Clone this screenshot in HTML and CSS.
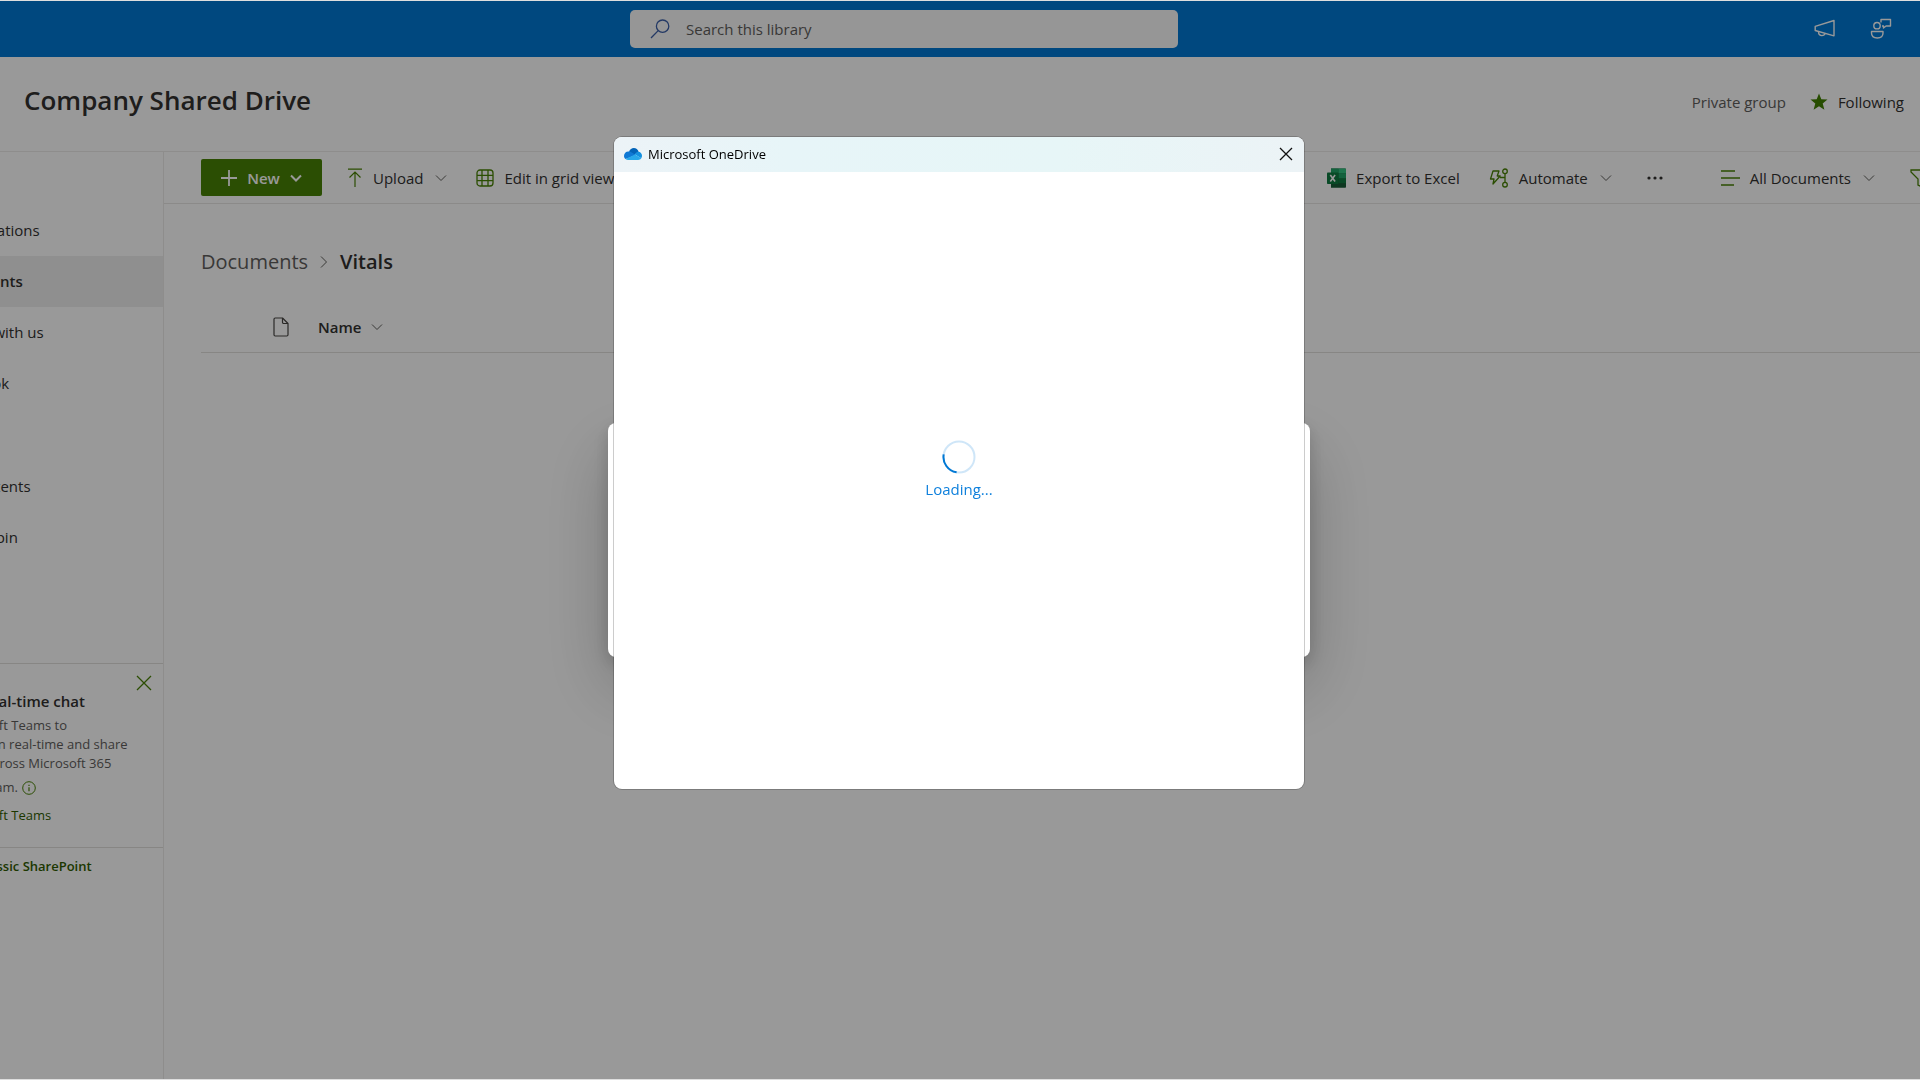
FILE: index.html
```html
<!DOCTYPE html>
<html lang="en">
<head>
<meta charset="utf-8">
<meta name="viewport" content="width=device-width, initial-scale=1">
<title>Company Shared Drive</title>
<link rel="stylesheet" href="styles.css">
</head>
<body>
<svg class="defs" aria-hidden="true">
  <symbol id="chevron" viewBox="0 0 12 12"><path d="M1 3.5l5 5 5-5" fill="none" stroke="currentColor"/></symbol>
</svg>
<div class="app">
  <header class="topbar">
    <form class="search" role="search">
      <label for="q" aria-label="Search">
        <svg width="20" height="20" viewBox="0 0 20 20" fill="none" stroke="#3b5fa8" stroke-width="1.3"><circle cx="12.6" cy="7.2" r="6.2"/><path d="M8.2 11.6L1 19"/></svg>
      </label>
      <input id="q" type="text" placeholder="Search this library">
    </form>
    <div class="topbar-actions">
      <button type="button" class="icon-button" aria-label="Announcements">
        <svg width="22" height="20" viewBox="0 0 22 20" fill="none" stroke="#fff" stroke-width="1.4" stroke-linejoin="round"><path d="M1.2 7.4L20 1.5v15.3L1.2 11.5z"/><path d="M4.5 12.6c0 2.4 1.400 4 3.300 4s3-1 3.300-2.200"/></svg>
      </button>
      <button type="button" class="icon-button" aria-label="Feedback">
        <svg width="22" height="22" viewBox="0 0 22 22" fill="none" stroke="#fff" stroke-width="1.4" stroke-linejoin="round"><circle cx="7" cy="7.700" r="3.200"/><path d="M1.500 13.500h11.500v1.500c0 3.300-2.300 5-5.700 5s-5.800-1.700-5.800-5z"/><path d="M11 4.500v-3h9.500v6.500h-4.500l-2.500 2v-2h-1.500"/></svg>
      </button>
    </div>
  </header>

  <div class="site-header">
    <h1>Company Shared Drive</h1>
    <div class="site-meta">
      <span class="muted">Private group</span>
      <button type="button" class="follow">
        <svg width="18" height="18" viewBox="0 0 18 18" fill="#418000"><path d="M9 .5l2.300 5.700 6.200.3-4.800 4 1.700 6.200L9 13.200l-5.400 3.500 1.700-6.200-4.800-4 6.200-.3z"/></svg>
        Following
      </button>
    </div>
  </div>

  <div class="columns">
    <aside class="sidebar">
      <nav class="site-nav">
        <a href="#">Conversations</a>
        <a href="#" class="selected" aria-current="page">Documents</a>
        <a href="#">Shared with us</a>
        <a href="#">Notebook</a>
        <a href="#" class="after-gap">Site contents</a>
        <a href="#">Recycle bin</a>
      </nav>
      <section class="teams">
        <button type="button" class="teams-close" aria-label="Dismiss">
          <svg width="16" height="16" viewBox="0 0 16 16" fill="none" stroke="#498205" stroke-width="1.300"><path d="M1 1l14 14M15 1L1 15"/></svg>
        </button>
        <h2>Add real-time chat</h2>
        <p>Add Microsoft Teams to<br>collaborate in real-time and share<br>resources across Microsoft 365</p>
        <p class="teams-last">with your team.
          <svg width="14" height="14" viewBox="0 0 14 14" fill="none" stroke="#498205"><circle cx="7" cy="7" r="6.300"/><path d="M7 6.200v4M7 3.700v1.300" stroke-width="1.200"/></svg>
        </p>
        <a href="#">Add Microsoft Teams</a>
      </section>
      <a href="#" class="classic">Return to classic SharePoint</a>
    </aside>

    <main class="content">
      <div class="commands">
        <button type="button" class="new">
          <svg width="16" height="16" viewBox="0 0 16 16" stroke="#fff" stroke-width="1.800"><path d="M8 0v16M0 8h16"/></svg>
          New
          <svg width="12" height="12" class="bold-chevron"><use href="#chevron"/></svg>
        </button>
        <button type="button" class="command upload">
          <svg width="16" height="20" viewBox="0 0 16 20" fill="none" stroke="#498205" stroke-width="1.200"><path d="M1 1.200h14M8 19V4M2.500 9.500L8 4l5.500 5.500"/></svg>
          Upload
          <svg class="chevron" width="12" height="12"><use href="#chevron"/></svg>
        </button>
        <button type="button" class="command">
          <svg width="18" height="18" viewBox="0 0 18 18" fill="none" stroke="#498205" stroke-width="1.300"><rect x="1" y="1" width="16" height="16" rx="3"/><path d="M6 1v16M12 1v16M1 6.300h16M1 11.700h16"/></svg>
          Edit in grid view
        </button>
        <div class="commands-far">
          <button type="button" class="command">
            <svg width="19" height="20" viewBox="0 0 19 20"><path d="M4 .500h14.200a.8.800 0 0 1 .8.800V19a.8.800 0 0 1-.8.800H4z" fill="#185c37"/><path d="M4 .500h7.500v5H4z" fill="#21a366"/><path d="M11.500.500h6.700a.8.800 0 0 1 .8.800v4.200h-7.500z" fill="#33c481"/><path d="M4 5.500h7.500v5H4z" fill="#107c41"/><path d="M11.500 5.500H19v5h-7.500z" fill="#21a366"/><path d="M11.500 10.500H19v4.700h-7.500z" fill="#107c41"/><rect y="4.500" width="11.500" height="11.500" rx=".8" fill="#107c41"/><path d="M3.300 7l4.800 6.500M8.100 7l-4.800 6.500" stroke="#fff" stroke-width="1.600"/></svg>
            Export to Excel
          </button>
          <button type="button" class="command automate">
            <svg width="20" height="20" viewBox="0 0 20 20" fill="none" stroke="#498205" stroke-width="1.300" stroke-linejoin="round"><path d="M4 3h6L8.200 8h3L4 16l1-5H1.500z"/><circle cx="16" cy="3.300" r="2.300"/><circle cx="16" cy="16.700" r="2.300"/><path d="M16 5.600v8.800M11 9.500h5"/></svg>
            Automate
            <svg class="chevron" width="12" height="12"><use href="#chevron"/></svg>
          </button>
          <button type="button" class="command more" aria-label="More">
            <svg width="16" height="4" viewBox="0 0 16 4" fill="#323130"><circle cx="2" cy="2" r="1.600"/><circle cx="8" cy="2" r="1.600"/><circle cx="14" cy="2" r="1.600"/></svg>
          </button>
          <button type="button" class="command view">
            <svg width="19" height="18" viewBox="0 0 19 18" stroke="#498205" stroke-width="1.400"><path d="M0 2h14M0 9h19M0 16h13"/></svg>
            All Documents
            <svg class="chevron" width="12" height="12"><use href="#chevron"/></svg>
          </button>
          <button type="button" class="command filter" aria-label="Filter">
            <svg width="20" height="20" viewBox="0 0 20 20" fill="none" stroke="#498205" stroke-width="1.300"><path d="M1 2h18v2l-7 7v8l-4-2v-6L1 4z"/></svg>
          </button>
        </div>
      </div>

      <nav class="crumbs" aria-label="Breadcrumb">
        <a href="#">Documents</a>
        <svg width="8" height="14" viewBox="0 0 8 14" fill="none" stroke="#605e5c"><path d="M1 1.500L6.500 7 1 12.500"/></svg>
        <span aria-current="page">Vitals</span>
      </nav>

      <table class="files">
        <thead>
          <tr>
            <th class="type-col" aria-label="Type"><svg width="16" height="20" viewBox="0 0 16 20" fill="none" stroke="#484644" stroke-width="1.200" stroke-linejoin="round"><path d="M2.200 1h7.300L15 6.500v11.300c0 .7-.5 1.200-1.200 1.200H2.200C1.500 19 1 18.500 1 17.800V2.200C1 1.500 1.500 1 2.200 1z"/><path d="M9.500 1v4.300c0 .7.500 1.200 1.200 1.200H15"/></svg></th>
            <th><span class="column-name">Name <svg class="chevron" width="12" height="12"><use href="#chevron"/></svg></span></th>
          </tr>
        </thead>
      </table>
    </main>
  </div>
</div>

<div class="overlay">
  <div class="panel"></div>
  <section class="dialog" role="dialog" aria-modal="true" aria-labelledby="dialog-title">
    <header class="dialog-bar">
      <svg width="18" height="12" viewBox="0 0 18 12"><path d="M5 3.500C6 1.300 7.700 0 9.800 0c2.300 0 4.200 1.500 4.800 3.700L10 7z" fill="#0364b8"/><path d="M0 8c0-2.600 1.900-4.600 4.400-4.600 1.500 0 2.300.4 3.300 1l4.300 2.700L1.600 11C.6 10.300 0 9.300 0 8z" fill="#0f78d4"/><path d="M14.200 3.700c2.200 0 3.800 1.800 3.800 4 0 1-.3 1.800-.8 2.500L11 6.500c.7-1.800 1.700-2.800 3.200-2.800z" fill="#1490df"/><path d="M1.500 11L11 6.400l6.300 3.900c-.7 1.100-1.800 1.700-3.200 1.700H4.300c-1.100 0-2.100-.4-2.800-1z" fill="#28a8ea"/></svg>
      <h2 id="dialog-title">Microsoft OneDrive</h2>
      <button type="button" class="dialog-close" aria-label="Close">
        <svg width="14" height="14" viewBox="0 0 14 14" fill="none" stroke="#111" stroke-width="1.300"><path d="M1 1l12 12M13 1L1 13"/></svg>
      </button>
    </header>
    <div class="dialog-body" role="status">
      <svg width="34" height="34" viewBox="0 0 34 34" fill="none" stroke-width="2"><circle cx="17" cy="17" r="15.500" stroke="#cfe6f8"/><path d="M1.700 14.300A15.500 15.500 0 0 0 14.600 32.300" stroke="#0078d4"/></svg>
      <span>Loading...</span>
    </div>
  </section>
</div>
</body>
</html>
```
FILE: styles.css
```css
* {
  box-sizing: border-box;
}

body {
  margin: 0;
  padding: 1px 0;
  min-height: 100vh;
  display: flex;
  background: #dedede;
  color: #323130;
  font: 15px/20px "Open Sans", "Noto Sans", sans-serif;
}

button {
  border: 0;
  padding: 0;
  background: none;
  color: inherit;
  font: inherit;
}

a {
  color: inherit;
  text-decoration: none;
}

h1,
h2,
p {
  margin: 0;
}

svg {
  flex: none;
}

.defs {
  position: absolute;
  width: 0;
  height: 0;
}

.app {
  flex: 1;
  min-width: 0;
  display: flex;
  flex-direction: column;
  background: #fff;
  overflow: hidden;
}

/* Suite bar */
.topbar {
  display: flex;
  align-items: center;
  justify-content: space-between;
  height: 56px;
  padding-right: 28px;
  background: #0078d4;
}

.search {
  display: flex;
  align-items: center;
  gap: 16px;
  width: 548px;
  height: 38px;
  margin-left: calc(50% - 316px);
  padding: 0 20px;
  border-radius: 5px;
  background: #fafafa;
}

.search label {
  display: flex;
}

.search input {
  flex: 1;
  border: 0;
  padding: 0;
  background: none;
  color: inherit;
  font: inherit;
}

.search input::placeholder {
  color: #605e5c;
  opacity: 1;
}

.topbar-actions {
  display: flex;
  gap: 34px;
}

.icon-button {
  display: flex;
  align-items: center;
}

/* Site header */
.site-header {
  display: flex;
  align-items: center;
  justify-content: space-between;
  height: 95px;
  padding: 0 16px 4px 24px;
  border-bottom: 1px solid #edebe9;
}

h1 {
  font-size: 26px;
  line-height: 36px;
  font-weight: 600;
  padding-bottom: 4px;
}

.site-meta,
.follow {
  display: flex;
  align-items: center;
}

.site-meta {
  gap: 24px;
}

.follow {
  gap: 10px;
}

.muted {
  color: #605e5c;
}

.columns {
  flex: 1;
  display: flex;
}

.sidebar {
  flex: none;
  width: 164px;
  border-right: 1px solid #edebe9;
  overflow: hidden;
  white-space: nowrap;
}

.site-nav {
  display: flex;
  flex-direction: column;
  margin-left: -76px;
  padding-top: 53px;
}

.site-nav a {
  padding-left: 16px;
  line-height: 51px;
}

.site-nav .selected {
  background: #efefef;
  font-weight: 600;
}

.site-nav .after-gap {
  margin-top: 52px;
}

.teams {
  display: flex;
  flex-direction: column;
  margin: 100px 0 0 -77px;
  padding: 11px 11px 22px 0;
  border-top: 1px solid #e1dfdd;
  border-bottom: 1px solid #e1dfdd;
  font-size: 13px;
  line-height: 19px;
  color: #605e5c;
}

.teams-close {
  display: flex;
  align-self: flex-end;
}

.teams h2 {
  padding-left: 28px;
  font-size: 15px;
  line-height: 20px;
  font-weight: 600;
  color: #323130;
}

.teams p {
  margin-top: 5px;
}

.teams .teams-last {
  display: flex;
  align-items: center;
  gap: 4px;
}

.teams a {
  margin-top: 9px;
  color: #305d00;
}

.classic {
  display: block;
  margin-left: -84px;
  font-size: 13px;
  line-height: 36px;
  font-weight: 600;
  color: #305d00;
}

/* Library */
.content {
  flex: 1;
  min-width: 0;
}

.commands {
  display: flex;
  align-items: center;
  height: 52px;
  padding-left: 37px;
  border-bottom: 1px solid #e8e6e4;
  overflow: hidden;
  white-space: nowrap;
}

.new,
.command,
.commands-far {
  display: flex;
  align-items: center;
}

.new {
  justify-content: center;
  gap: 10px;
  width: 121px;
  height: 37px;
  border-radius: 2px;
  background: #498205;
  color: #fff;
  font-weight: 600;
}

.bold-chevron {
  stroke-width: 2;
}

.command {
  gap: 10px;
  margin-right: 29px;
}

.command .chevron {
  margin-left: 2px;
}

.upload {
  margin-left: 25px;
}

.chevron {
  color: #605e5c;
}

.commands-far {
  margin-left: auto;
  margin-right: -10px;
}

.automate,
.view {
  margin-right: 35px;
}

.more {
  margin-right: 58px;
}

.filter {
  margin-right: 0;
}

.crumbs {
  display: flex;
  align-items: center;
  gap: 12px;
  padding: 44px 0 0 37px;
  font-size: 20px;
  line-height: 28px;
}

.crumbs a {
  color: #605e5c;
}

.crumbs span {
  font-weight: 600;
}

.files {
  width: calc(100% - 37px);
  margin: 26px 0 0 37px;
  border-collapse: collapse;
  border-bottom: 1px solid #e1dfdd;
}

.files th {
  height: 50px;
  padding: 0;
  text-align: left;
  font-weight: 600;
}

.files .type-col {
  width: 117px;
  padding-left: 72px;
}

.files svg {
  display: block;
}

.column-name {
  display: flex;
  align-items: center;
  gap: 10px;
}

/* Dialogs */
.overlay {
  position: fixed;
  inset: 1px 0;
  display: grid;
  justify-items: center;
  padding-right: 2px;
  background: rgba(0, 0, 0, 0.4);
}

.panel,
.dialog {
  grid-area: 1 / 1;
}

.panel {
  align-self: center;
  width: 702px;
  height: 234px;
  border-radius: 8px;
  background: #fff;
  box-shadow: 0 30px 68px rgba(0, 0, 0, 0.22), 0 6px 17px rgba(0, 0, 0, 0.18);
}

.dialog {
  z-index: 1;
  align-self: start;
  display: flex;
  flex-direction: column;
  width: 690px;
  height: 652px;
  margin-top: 136px;
  border-radius: 8px;
  background: #fff;
  box-shadow: 0 0 0 1px rgba(0, 0, 0, 0.2);
  overflow: hidden;
}

.dialog-bar {
  display: flex;
  align-items: center;
  gap: 6px;
  height: 35px;
  padding: 0 11px 2px 10px;
  background: linear-gradient(90deg, #ecf3f7, #e7f5f8 25%, #e7f6f7 65%, #ecf3f6);
  color: #000;
}

.dialog-bar h2 {
  font-size: 13px;
  line-height: 20px;
  font-weight: 400;
}

.dialog-close {
  display: flex;
  margin-left: auto;
}

.dialog-body {
  flex: 1;
  display: flex;
  flex-direction: column;
  align-items: center;
  gap: 5px;
  padding-top: 268px;
  color: #0f80dc;
}
```
